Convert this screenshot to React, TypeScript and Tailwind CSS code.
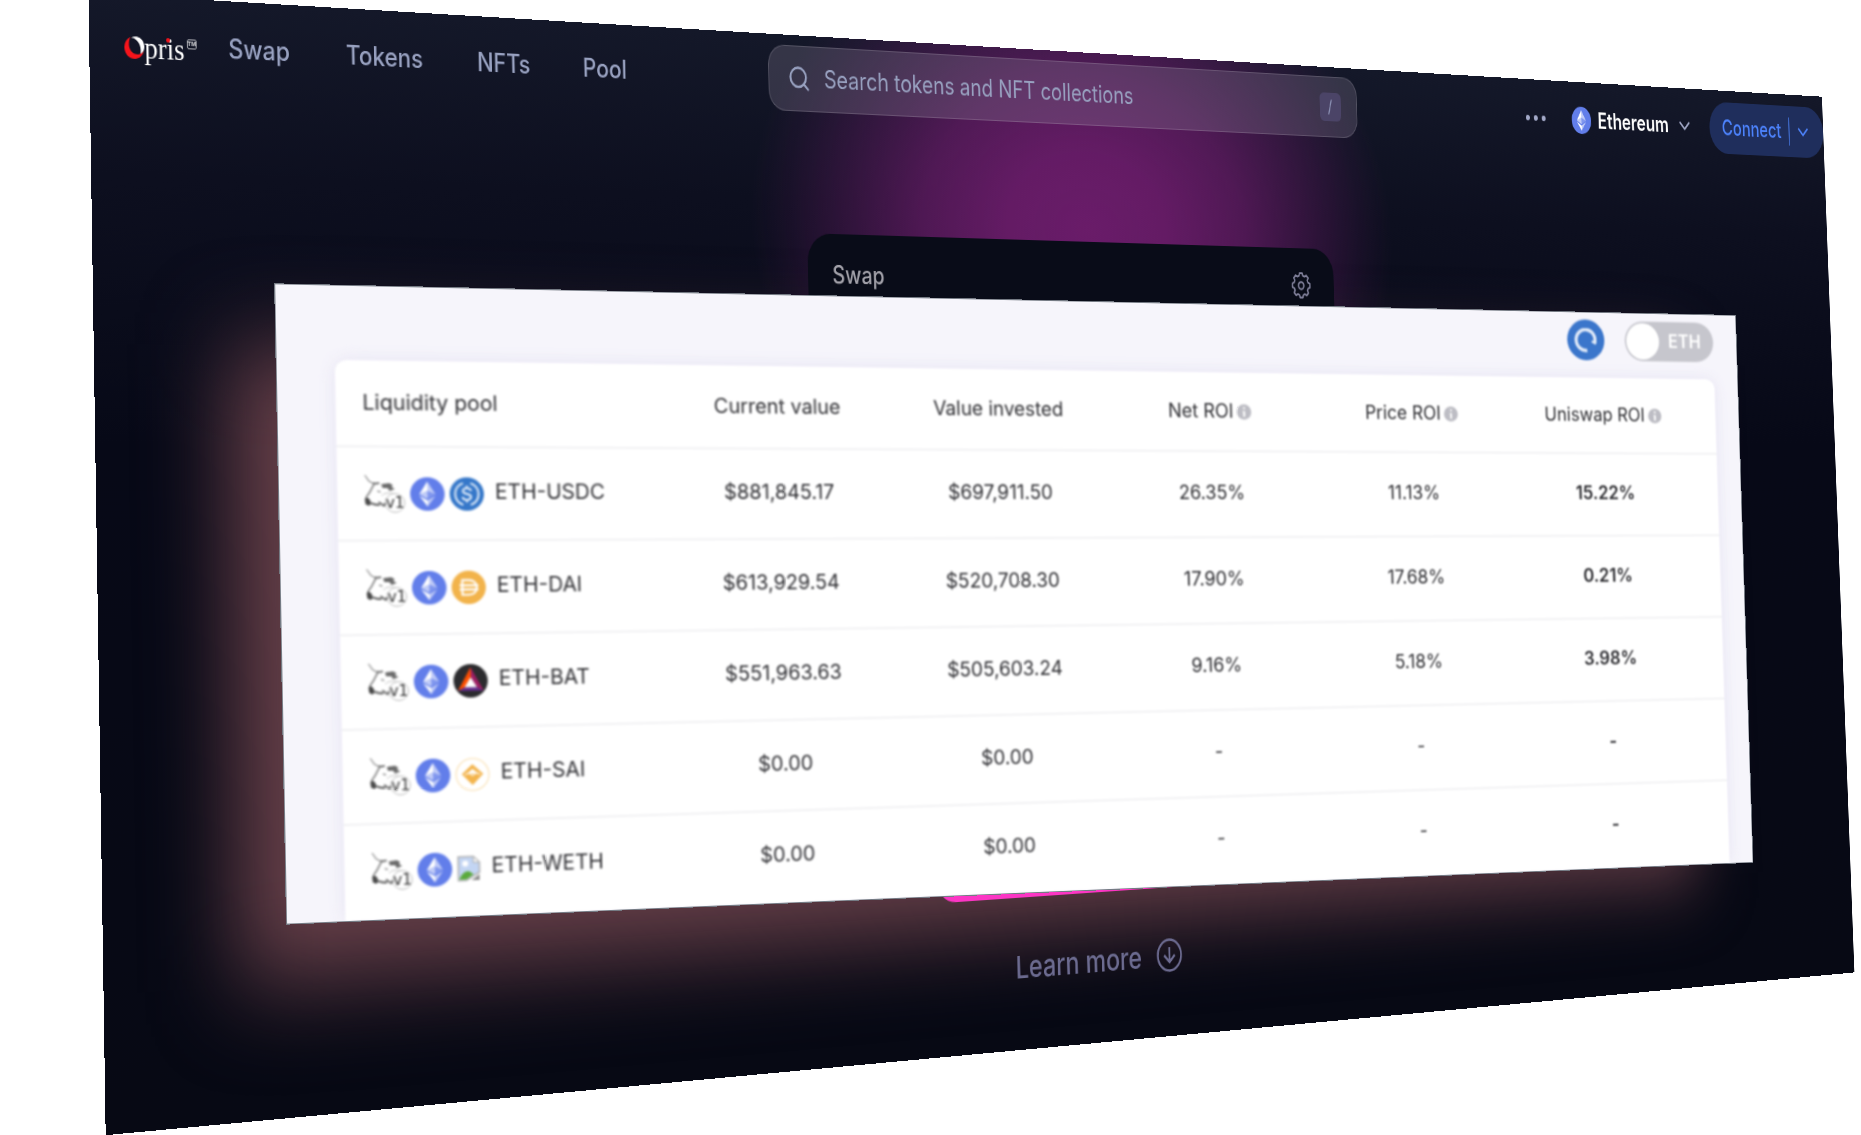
import React, { useLayoutEffect, useRef, useState } from "react";
import { ChevronDown, Search } from "lucide-react";

type Point = [number, number];
type Quad = [Point, Point, Point, Point];

// Corners of the tilted planes as fractions of the stage: TL, TR, BR, BL.
const PAGE_QUAD: Quad = [
  [0.0475, -0.0062],
  [0.9789, 0.0852],
  [0.9964, 0.8567],
  [0.0568, 1.0002],
];
const CARD_QUAD: Quad = [
  [0.1473, 0.2496],
  [0.9327, 0.2775],
  [0.9421, 0.7601],
  [0.1537, 0.8147],
];

function projectTo(quad: Quad, w: number, h: number, sw: number, sh: number): string {
  const [[x0, y0], [x1, y1], [x2, y2], [x3, y3]] = quad.map(([x, y]) => [x * sw, y * sh]);
  const dx1 = x1 - x2;
  const dx2 = x3 - x2;
  const dx3 = x0 - x1 + x2 - x3;
  const dy1 = y1 - y2;
  const dy2 = y3 - y2;
  const dy3 = y0 - y1 + y2 - y3;
  const det = dx1 * dy2 - dx2 * dy1;
  const g = (dx3 * dy2 - dx2 * dy3) / det;
  const k = (dx1 * dy3 - dx3 * dy1) / det;
  const a = x1 - x0 + g * x1;
  const b = x3 - x0 + k * x3;
  const d = y1 - y0 + g * y1;
  const e = y3 - y0 + k * y3;
  return `matrix3d(${[a / w, d / w, 0, g / w, b / h, e / h, 0, k / h, 0, 0, 1, 0, x0, y0, 0, 1].join(",")})`;
}

function Plane({ quad, className, children }: { quad: Quad; className: string; children: React.ReactNode }) {
  const ref = useRef<HTMLDivElement>(null);
  const [transform, setTransform] = useState("none");
  useLayoutEffect(() => {
    const update = () => {
      const el = ref.current;
      const stage = el?.parentElement;
      if (!el || !stage) return;
      setTransform(projectTo(quad, el.offsetWidth, el.offsetHeight, stage.clientWidth, stage.clientHeight));
    };
    update();
    window.addEventListener("resize", update);
    return () => window.removeEventListener("resize", update);
  }, [quad]);
  return (
    <div ref={ref} className={className} style={{ transform }}>
      {children}
    </div>
  );
}

function Logo() {
  return (
    <a href="#" className="flex items-center pt-1.5 text-white" aria-label="Opris">
      <svg viewBox="0 0 20 20" className="h-5 w-5" aria-hidden="true">
        <path d="M6.500.8C2 2.500-.3 6.500 0 11c.4 5 4.500 9 9.500 9 4.500 0 8.500-2.500 10-7.500-2 2.500-5 3.800-8 3.300C7.500 15.200 4.800 12 4.600 8c-.1-3 .4-5.500 1.900-7.200Z" fill="#f5141b" />
        <path d="M7 1.200C12-1 19.500 1 20 8.500c0 1.800-.3 3-1 4.200-.8 1.200-1.800 2-3 2.500 1-5-.5-9.500-4-12C10.500 2 8.800 1.200 7 1.200Z" fill="#fff" />
      </svg>
      <span className="relative font-['Liberation_Serif',serif] text-[27px] leading-none">
        pris
        <span className="absolute left-[22px] top-[3px] h-[4px] w-[4px] rounded-full bg-[#f5141b]" />
      </span>
      <span className="mb-3 ml-0.5 rounded-[2px] border border-white/60 font-['Liberation_Sans',sans-serif] text-[6px] font-bold leading-[7px] text-white/80">TM</span>
    </a>
  );
}

function EthIcon({ className }: { className: string }) {
  return (
    <svg viewBox="0 0 32 32" className={className} aria-hidden="true">
      <circle cx="16" cy="16" r="16" fill="#627eea" />
      <path d="M16 4v8.900l7.500 3.300Z" fill="#fff" opacity=".6" />
      <path d="M16 4 8.500 16.200l7.500-3.300Z" fill="#fff" />
      <path d="M16 22v6l7.500-10.400Z" fill="#fff" opacity=".6" />
      <path d="M16 28v-6l-7.500-4.400Z" fill="#fff" />
      <path d="m16 20.600 7.500-4.400-7.500-3.300Z" fill="#fff" opacity=".2" />
      <path d="m8.500 16.200 7.500 4.400v-7.700Z" fill="#fff" opacity=".6" />
    </svg>
  );
}

function UniIcon() {
  return (
    <svg viewBox="0 0 40 40" className="h-10 w-10 shrink-0" fill="none" aria-hidden="true">
      <path d="m1 1 4 6 5 3" stroke="#8f8f8f" strokeWidth="1.200" />
      <path d="M9 9c2 1 4 0 6 0" stroke="#777" strokeWidth="2" />
      <path d="m17 10 8-1 3 2-1 2 3 2-5 2-2-3-5 0Z" fill="#6b6b6b" />
      <path d="M10 10c-2 3-3 6-5 9-2 2-3 4-4 8" stroke="#7d7d7d" strokeWidth="1.600" />
      <path d="M1 24c2-1 4 0 5 3l1 3-3 2-3-2Z" fill="#4a4a4a" />
      <path d="M7 29c2 2 5 2 8 2" stroke="#666" strokeWidth="2" />
      <path d="m13 17 3 1" stroke="#999" strokeWidth="1.500" />
      <path d="M17 22c3-4 8-3 11-3" stroke="#c4c4c4" />
      <circle cx="30" cy="29" r="9.500" fill="#fff" stroke="#bdbdbd" />
      <path d="m14 28 5 4 2-3" stroke="#666" strokeWidth="1.800" />
      <text x="21" y="34" fontSize="15" fontFamily="DejaVu Sans, sans-serif" fill="#333">v1</text>
    </svg>
  );
}

function UsdcIcon() {
  return (
    <svg viewBox="0 0 32 32" className="h-[34px] w-[34px] shrink-0" fill="none" aria-hidden="true">
      <circle cx="16" cy="16" r="16" fill="#3577c9" />
      <path d="M12.500 5.600a11 11 0 0 0 0 20.800M19.500 5.600a11 11 0 0 1 0 20.800" stroke="#dce9f8" strokeWidth="2" />
      <path d="M19.800 13c-.3-1.700-1.600-2.600-3.700-2.600-2.300 0-3.700 1-3.700 2.700 0 4 7.400 1.500 7.400 5.600 0 1.800-1.500 2.900-3.800 2.900-2.400 0-3.800-1-4-2.900M16 8v2.400m0 11.200V24" stroke="#dce9f8" strokeWidth="2" />
    </svg>
  );
}

function DaiIcon() {
  return (
    <svg viewBox="0 0 32 32" className="h-[34px] w-[34px] shrink-0" fill="none" aria-hidden="true">
      <circle cx="16" cy="16" r="16" fill="#f2b34b" />
      <path d="M10 9h6c5 0 7.500 3 7.500 7S21 23 16 23h-6ZM7.500 14h17.500M7.500 18h17.500" stroke="#fff" strokeWidth="2" />
    </svg>
  );
}

function BatIcon() {
  return (
    <svg viewBox="0 0 32 32" className="h-[34px] w-[34px] shrink-0" aria-hidden="true">
      <circle cx="16" cy="16" r="16" fill="#2b2b2e" />
      <path d="M16 3v10l-5.500 9L4 25.500Z" fill="#ff5000" />
      <path d="m16 3 12 22.500-6.500-3.500L16 13Z" fill="#9e1f63" />
      <path d="M4 25.500 10.500 22h11l6.500 3.500Z" fill="#662d91" />
      <path d="m16 12.500 5.800 9.700H10.200Z" fill="#fff" />
    </svg>
  );
}

function SaiIcon() {
  return (
    <svg viewBox="0 0 32 32" className="h-[34px] w-[34px] shrink-0" aria-hidden="true">
      <circle cx="16" cy="16" r="15.300" fill="#fff" stroke="#fadfae" />
      <path d="m16 6 10 9.500L16 26 6 15.500Z" fill="#f3b44c" />
      <path d="m16 10.500 5 4.500H11Z" fill="#fff" />
      <path d="m9 16 3.500-1.500L16 17l3.500-2.500L23 16" stroke="#fff" strokeWidth="1" fill="none" />
    </svg>
  );
}

function MissingIcon() {
  return (
    <svg viewBox="0 0 23 26" className="h-[26px] w-[23px] shrink-0" aria-hidden="true">
      <path d="M1 1h15l6 6v10L9 25H1Z" fill="#c3d5f3" stroke="#b4b4b4" strokeWidth="1.500" />
      <path d="M16 1v6h6Z" fill="#fff" stroke="#aaa" />
      <circle cx="8" cy="8" r="3" fill="#fff" />
      <path d="M2 24c2-6 6-9 10-8l4 3-7 5Z" fill="#5aaa3c" />
      <path d="m14 25 8-6v6Z" fill="#8f8f8f" />
    </svg>
  );
}

function GearIcon() {
  return (
    <svg viewBox="0 0 24 24" className="h-8 w-8" fill="none" stroke="currentColor" strokeWidth="1.500" strokeLinejoin="round" aria-hidden="true">
      <path d="M10 3.500 10.600 1.500h2.800L14 3.500l1.600.7 1.900-1 2 2-1 1.900.7 1.600 2 .9v3l-2 .8-.7 1.600 1 1.900-2 2-1.900-1-1.600.7-.6 2h-2.800l-.6-2-1.600-.7-1.900 1-2-2 1-1.900-.7-1.600-2-.8v-3l2-.9.7-1.600-1-1.900 2-2 1.900 1Z" />
      <circle cx="12" cy="11.200" r="2.800" />
    </svg>
  );
}

function InfoIcon() {
  return (
    <svg viewBox="0 0 16 16" className="h-[17px] w-[17px]" aria-hidden="true">
      <circle cx="8" cy="8" r="8" fill="#bdbdc4" />
      <path d="M7 3h2.200v2H7ZM6.500 7h2.700v6H7V8.500h-.5Z" fill="#fff" />
    </svg>
  );
}

const LINKS = ["Swap", "Tokens", "NFTs", "Pool"];

function Header() {
  return (
    <header className="grid h-[84px] grid-cols-[33%_34.600%_1fr] items-center text-2xl font-medium text-[#98a1c0]">
      <div className="flex items-center gap-8 pl-[35px] pt-0.5">
        <Logo />
        <nav className="flex gap-[59px]">
          {LINKS.map((label) => (
            <a key={label} href={`#${label.toLowerCase()}`}>
              {label}
            </a>
          ))}
        </nav>
      </div>
      <label className="ml-0.5 flex h-16 items-center gap-4 rounded-[20px] border border-white/15 bg-[#857c92]/30 pl-[22px] pr-[22px] font-normal">
        <Search className="h-7 w-7 shrink-0" strokeWidth={2} aria-hidden="true" />
        <input
          type="search"
          aria-label="Search tokens and NFT collections"
          placeholder="Search tokens and NFT collections"
          className="min-w-0 flex-1 bg-transparent outline-none placeholder:text-[#98a1c0]"
        />
        <kbd className="flex h-[30px] w-[30px] items-center justify-center rounded-md bg-[#4b4467] font-['Inter',sans-serif] text-lg text-[#8f95b8]">/</kbd>
      </label>
      <div className="flex items-center justify-end">
        <button type="button" aria-label="More" className="mr-10 flex gap-1.5">
          <span className="h-[6px] w-[6px] rounded-full bg-[#a3a9c8]" />
          <span className="h-[6px] w-[6px] rounded-full bg-[#a3a9c8]" />
          <span className="h-[6px] w-[6px] rounded-full bg-[#a3a9c8]" />
        </button>
        <label className="mr-[26px] flex items-center gap-2.5 font-semibold text-white">
          <EthIcon className="h-[30px] w-[30px]" />
          <select aria-label="Network" className="w-[113px] appearance-none bg-transparent outline-none">
            <option>Ethereum</option>
          </select>
          <ChevronDown className="h-7 w-7 text-[#a3a9c8]" strokeWidth={2} aria-hidden="true" />
        </label>
        <div className="flex h-[58px] items-center rounded-full bg-[#1f2e5c] pl-5 pr-5 text-[#4c82fb]">
          <button type="button" className="pr-3">
            Connect
          </button>
          <button type="button" aria-label="Wallet options" className="flex h-8 items-center border-l-2 border-[#3c64bf] pl-2">
            <ChevronDown className="h-7 w-7" strokeWidth={2} aria-hidden="true" />
          </button>
        </div>
      </div>
    </header>
  );
}

function SwapPage() {
  return (
    <Plane
      quad={PAGE_QUAD}
      className="relative flex aspect-[9/4] w-[120%] origin-top-left flex-col overflow-hidden bg-[radial-gradient(ellipse_420px_310px_at_50.800%_18%,#711d6fec_0%,#711d6fdc_25%,#711d6fa8_50%,#711d6f50_75%,#711d6f1c_90%,#711d6f00_100%),linear-gradient(180deg,#141829_0%,#0d0f1f_16%,#070917_40%,#070914_100%)]"
    >
      <div className="absolute left-[6%] top-[31%] h-[57%] w-[83%] bg-[#663f48] blur-[42px]" />
      <Header />
      <main className="relative flex flex-1 flex-col items-center pl-4 pt-[108px] font-medium">
        <section className="h-[520px] w-[688px] rounded-[28px] bg-[#090c18]">
          <div className="flex items-center justify-between px-[30px] pt-6">
            <h2 className="text-2xl text-[#a2a1a9]">Swap</h2>
            <button type="button" aria-label="Settings" className="text-[#80809a]">
              <GearIcon />
            </button>
          </div>
        </section>
        <div className="mt-10 h-[92px] w-[412px] rounded-3xl bg-[#fb36c4]" />
        <a href="#learn" className="mt-12 flex items-center gap-5 text-[30px] leading-10 text-[#6c6b90]">
          Learn more
          <svg viewBox="0 0 34 34" className="h-[34px] w-[34px]" fill="none" stroke="currentColor" strokeWidth="2.500" aria-hidden="true">
            <circle cx="17" cy="17" r="15.500" />
            <path d="M17 9v15m-7-7 7 7 7-7" />
          </svg>
        </a>
      </main>
    </Plane>
  );
}

const COLUMNS = [
  { label: "Current value", info: false },
  { label: "Value invested", info: false },
  { label: "Net ROI", info: true },
  { label: "Price ROI", info: true },
  { label: "Uniswap ROI", info: true },
];

const POOLS = [
  { name: "ETH-USDC", icon: <UsdcIcon />, values: ["$881,845.17", "$697,911.50", "26.35%", "11.13%", "15.22%"] },
  { name: "ETH-DAI", icon: <DaiIcon />, values: ["$613,929.54", "$520,708.30", "17.90%", "17.68%", "0.21%"] },
  { name: "ETH-BAT", icon: <BatIcon />, values: ["$551,963.63", "$505,603.24", "9.16%", "5.18%", "3.98%"] },
  { name: "ETH-SAI", icon: <SaiIcon />, values: ["$0.00", "$0.00", "-", "-", "-"] },
  { name: "ETH-WETH", icon: <MissingIcon />, values: ["$0.00", "$0.00", "-", "-", "-"] },
];

function PoolCard() {
  return (
    <Plane
      quad={CARD_QUAD}
      className="absolute left-0 top-0 flex h-[640px] w-[88%] origin-top-left flex-col overflow-hidden border border-[#1f2a36]/60 bg-[#f6f5fb]"
    >
      <div className="flex flex-1 flex-col pl-14 pr-[30px] text-[21px] text-[#303034] blur-[1px]">
        <div className="flex shrink-0 items-center justify-end gap-[26px] pb-5 pt-2">
          <button type="button" aria-label="Refresh" className="flex h-[47px] w-[47px] items-center justify-center rounded-full bg-[#3b76cb]">
            <svg viewBox="0 0 28 28" className="h-7 w-7" fill="none" stroke="#dfe9f8" strokeWidth="4" aria-hidden="true">
              <path d="M16 25.500A12 12 0 1 1 26 16" />
              <path d="m22 15 4 2 2-4" strokeWidth="3" />
            </svg>
          </button>
          <label className="flex h-[46px] w-[114px] items-center rounded-full bg-[#c6c6cd] pl-0.5 font-semibold text-white">
            <input type="checkbox" role="switch" className="h-[42px] w-[42px] appearance-none rounded-full bg-white" />
            <span className="flex-1 pr-1 text-center">ETH</span>
          </label>
        </div>
        <div className="flex-1 rounded-t-xl bg-white shadow-[0_0_18px_#e6e3f2]">
          <table className="w-full table-fixed border-collapse text-center">
            <thead>
              <tr className="h-[87px] border-b-2 border-[#f1f1f3]">
                <th scope="col" className="pl-[26px] text-left font-normal">
                  Liquidity pool
                </th>
                {COLUMNS.map(({ label, info }) => (
                  <th key={label} scope="col" className="w-60 font-normal last:w-[262px] last:pr-[26px]">
                    <span className="inline-flex items-center gap-1">
                      {label}
                      {info && <InfoIcon />}
                    </span>
                  </th>
                ))}
              </tr>
            </thead>
            <tbody>
              {POOLS.map(({ name, icon, values }) => (
                <tr key={name} className="h-[95px] border-b-2 border-[#f1f1f3] last:border-0">
                  <th scope="row" className="pl-[26px] text-left font-normal">
                    <span className="flex items-center gap-[5px]">
                      <UniIcon />
                      <EthIcon className="h-[34px] w-[34px] shrink-0" />
                      {icon}
                      <span className="pb-1 pl-1.5">{name}</span>
                    </span>
                  </th>
                  {values.map((value, i) => (
                    <td key={i} className="pb-1 last:pr-[26px] last:font-semibold">
                      {value}
                    </td>
                  ))}
                </tr>
              ))}
            </tbody>
          </table>
        </div>
      </div>
    </Plane>
  );
}

export default function App() {
  return (
    <div className="relative min-h-screen overflow-hidden bg-white font-['Inter',sans-serif]">
      <SwapPage />
      <PoolCard />
    </div>
  );
}
